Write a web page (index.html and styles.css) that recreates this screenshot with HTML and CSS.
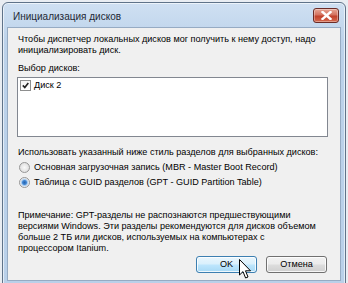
FILE: index.html
```html
<!DOCTYPE html>
<html lang="ru">

<head>
    <meta charset="UTF-8">
    <title>Инициализация дисков</title>
    <link rel="stylesheet" href="styles.css">
</head>

<body>

    <div class="window">
        <div class="titlebar">
            <span class="title">Инициализация дисков</span>
            <div class="close-btn">
                <svg width="11" height="9" viewBox="0 0 11 9">
                    <path d="M1.5 1 L9.5 8 M9.5 1 L1.5 8" stroke="#fff" stroke-width="2.4" stroke-linecap="square"/>
                </svg>
            </div>
        </div>

        <div class="client">
            <p class="intro">Чтобы диспетчер локальных дисков мог получить к нему доступ, надо<br>инициализировать диск.</p>

            <p class="label">Выбор дисков:</p>
            <div class="listbox">
                <div class="list-item">
                    <span class="checkbox">
                        <svg width="7" height="7" viewBox="0 0 7 7">
                            <path d="M0.8 3.4 L2.8 5.6 L6.3 0.9" stroke="#222" stroke-width="1.6" fill="none"/>
                        </svg>
                    </span>
                    <span>Диск 2</span>
                </div>
            </div>

            <p class="label style-label">Использовать указанный ниже стиль разделов для выбранных дисков:</p>
            <div class="radio-row">
                <span class="radio"></span>
                <span>Основная загрузочная запись (MBR - Master Boot Record)</span>
            </div>
            <div class="radio-row">
                <span class="radio checked"></span>
                <span>Таблица с GUID разделов (GPT - GUID Partition Table)</span>
            </div>

            <p class="note">Примечание: GPT-разделы не распознаются предшествующими<br>версиями Windows. Эти разделы рекомендуются для дисков объемом<br>больше 2 ТБ или дисков, используемых на компьютерах с<br>процессором Itanium.</p>

            <div class="buttons">
                <div class="btn btn-default">OK</div>
                <div class="btn">Отмена</div>
                <svg class="cursor" width="14" height="21" viewBox="0 0 14 21">
                    <path d="M0.5 0.5 L0.5 16 L4 12.6 L6.6 19 L9 18 L6.5 11.8 L11.5 11.8 Z" fill="#fff" stroke="#000" stroke-width="1"/>
                </svg>
            </div>
        </div>
    </div>

</body>

</html>
```

FILE: styles.css
```css
body {
    margin: 0;
    background-color: #e9edf2;
    font-family: "Liberation Sans", Arial, sans-serif;
    font-size: 9.1px;
    color: #000;
    overflow: hidden;
}

.window {
    margin: 2px 2px 0 2px;
    height: 290px;
    border: 1px solid #5f7389;
    border-radius: 6px 6px 0 0;
    background: linear-gradient(#cfe0f2, #bcd2ea 40px, #b9d0e9);
    padding: 0 4px;
    box-shadow: inset 0 0 0 1px rgba(255, 255, 255, 0.6);
}

.titlebar {
    height: 24px;
    display: flex;
    align-items: center;
    justify-content: space-between;
    padding-left: 6px;
}

.title {
    font-size: 10px;
    color: #1e2936;
    margin-top: 2px;
}

.close-btn {
    width: 24px;
    height: 13px;
    margin-top: 1px;
    margin-right: 2px;
    border: 1px solid #6b2c27;
    border-radius: 3px;
    background: linear-gradient(#e8a796, #d47360 45%, #c2422c 55%, #d46a4f);
    display: flex;
    align-items: center;
    justify-content: center;
    box-shadow: inset 0 0 0 1px rgba(255, 255, 255, 0.35);
}

.client {
    height: 246px;
    background-color: #f0f0f0;
    border: 1px solid #96abc3;
    padding: 6px 10px 0 10px;
    line-height: 11px;
    white-space: nowrap;
    position: relative;
}

p {
    margin: 0;
}

.label {
    margin-top: 7px;
}

.listbox {
    margin: 3px 0 0 -1px;
    height: 54px;
    width: 305px;
    background-color: #fff;
    border: 1px solid #828790;
    padding: 2px 2px;
}

.list-item {
    display: flex;
    align-items: center;
    gap: 3px;
}

.checkbox {
    width: 9px;
    height: 9px;
    border: 1px solid #8e8f8f;
    background: linear-gradient(#f4f4f4, #fff);
    display: flex;
    align-items: center;
    justify-content: center;
}

.style-label {
    margin-top: 10px;
}

.radio-row {
    display: flex;
    align-items: center;
    gap: 4px;
    height: 15px;
}

.style-label + .radio-row {
    margin-top: 2px;
}

.radio {
    width: 9px;
    height: 9px;
    border-radius: 50%;
    border: 1px solid #969696;
    background: radial-gradient(#fafafa, #d6d6d6);
    margin-left: 1px;
}

.radio.checked {
    background: radial-gradient(circle, #2b63a8 0, #3f87d6 2px, #a6c8ec 3px, #f4f4f4 4.5px);
}

.note {
    margin-top: 20px;
}

.buttons {
    position: relative;
    display: flex;
    justify-content: flex-end;
    gap: 9px;
    margin-top: 2px;
    padding-right: 3px;
}

.btn {
    width: 59px;
    height: 15px;
    border: 1px solid #707070;
    border-radius: 3px;
    background: linear-gradient(#f2f2f2, #ebebeb 48%, #dddddd 52%, #cfcfcf);
    box-shadow: inset 0 0 0 1px rgba(255, 255, 255, 0.8);
    display: flex;
    align-items: center;
    justify-content: center;
}

.btn-default {
    border-color: #3c7fb1;
    background: linear-gradient(#eaf6fd, #d9f0fc 48%, #bee6fd 52%, #a7d9f5);
}

.cursor {
    position: absolute;
    left: 221px;
    top: 3px;
}
```
